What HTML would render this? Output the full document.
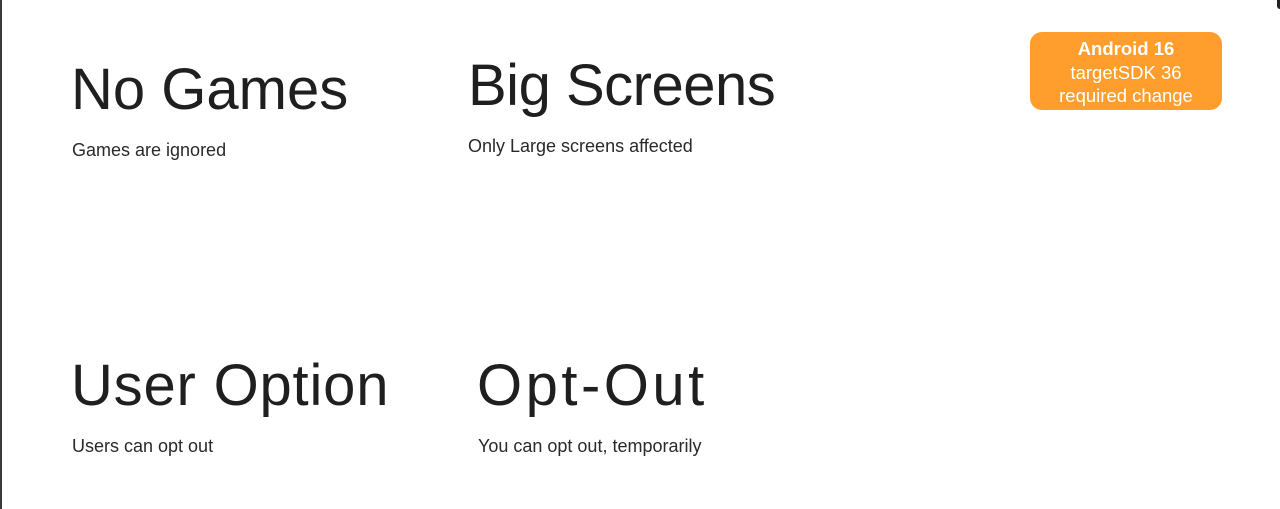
<!DOCTYPE html>
<html><head><meta charset="utf-8"><style>
html,body{margin:0;padding:0;}
body{width:1280px;height:509px;background:#fff;position:relative;overflow:hidden;font-family:"Liberation Sans",sans-serif;color:#202124;}
.edge{position:absolute;left:0;top:0;width:2px;height:509px;background:#3a3a3a;}
.corner{position:absolute;right:0;top:0;width:3px;height:9px;background:#222;border-bottom-left-radius:3px;}
.t{position:absolute;font-size:58px;line-height:1;white-space:nowrap;color:#1f1f1f;}
.s{position:absolute;font-size:18px;line-height:1;white-space:nowrap;color:#2a2a2a;}
.badge{position:absolute;left:1030px;top:32px;width:192px;height:78px;background:#FF9E2C;border-radius:12px;color:#fff;text-align:center;font-size:18.5px;line-height:23.5px;padding-top:5px;box-sizing:border-box;}
</style></head><body>
<div class="edge"></div>
<div class="corner"></div>
<div class="t" style="left:71px;top:61px">No Games</div>
<div class="s" style="left:72px;top:141px">Games are ignored</div>
<div class="t" style="left:468px;top:57px;letter-spacing:-0.5px">Big Screens</div>
<div class="s" style="left:468px;top:137px">Only Large screens affected</div>
<div class="t" style="left:71px;top:357px;letter-spacing:0.8px">User Option</div>
<div class="s" style="left:72px;top:437px">Users can opt out</div>
<div class="t" style="left:477px;top:357px;letter-spacing:3.5px">Opt-Out</div>
<div class="s" style="left:478px;top:437px">You can opt out, temporarily</div>
<div class="badge"><b>Android 16</b><br>targetSDK 36<br>required change</div>
</body></html>
